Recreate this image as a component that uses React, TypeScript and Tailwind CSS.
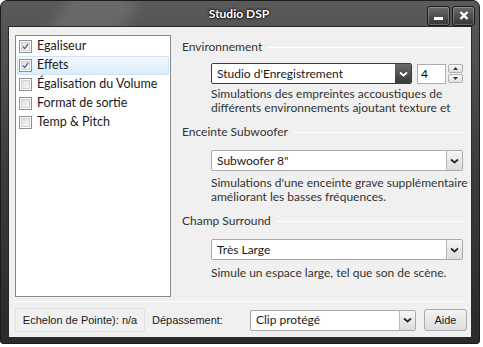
import React from "react";

const ui = { fontFamily: 'Lato, "Noto Sans", sans-serif' };
const classic = { fontFamily: '"Liberation Sans", Arial, sans-serif' };

function Chevron({ light = false }: { light?: boolean }) {
  return (
    <svg width="9" height="6" viewBox="0 0 9 6">
      <path d="M1 1.5 L4.5 4.5 L8 1.5" fill="none" stroke={light ? "#ffffff" : "#2a2a2a"} strokeWidth="1.8" />
    </svg>
  );
}

function Check({ checked }: { checked: boolean }) {
  return (
    <div className="w-[13px] h-[13px] border border-[#8f8f8f] bg-white p-[1px] shrink-0">
      <div className="w-full h-full bg-gradient-to-br from-[#e0e0e0] to-[#f8f8f8] border border-[#d0d0d0] flex items-center justify-center">
        {checked && (
          <svg width="9" height="9" viewBox="0 0 9 9">
            <path d="M1 4.5 L3.5 7 L8 1" fill="none" stroke="#4a5fa0" strokeWidth="1.6" />
          </svg>
        )}
      </div>
    </div>
  );
}

function Combo({ value, dark = false, className = "" }: { value: string; dark?: boolean; className?: string }) {
  return (
    <div className={`flex h-[21px] border ${dark ? "border-[#3c3c3c]" : "border-[#a9a9a9]"} bg-white rounded-[2px] ${className}`}>
      <div className="flex-1 flex items-center pl-[5px] text-[12px] text-[#1a1a1a] whitespace-nowrap" style={ui}>{value}</div>
      {dark ? (
        <div className="w-[16px] flex items-center justify-center rounded-r-[1px] bg-gradient-to-b from-[#6a6a6a] to-[#3a3a3a]">
          <Chevron light />
        </div>
      ) : (
        <div className="w-[16px] flex items-center justify-center border-l border-[#b8b8b8] bg-gradient-to-b from-[#f6f6f6] to-[#dcdcdc]">
          <Chevron />
        </div>
      )}
    </div>
  );
}

function Section({ title, children }: { title: string; children: React.ReactNode }) {
  return (
    <div className="flex flex-col">
      <div className="flex items-center gap-[6px] h-[16px]">
        <span className="text-[12px] text-[#333] whitespace-nowrap" style={ui}>{title}</span>
        <div className="flex-1 h-px bg-[#dcdcdc] border-b border-white" />
      </div>
      <div className="pl-[29px]">{children}</div>
    </div>
  );
}

const items = [
  { label: "Egaliseur", checked: true },
  { label: "Effets", checked: true, selected: true },
  { label: "Égalisation du Volume", checked: false },
  { label: "Format de sortie", checked: false },
  { label: "Temp & Pitch", checked: false },
];

export default function App() {
  return (
    <div className="w-[483px] h-[347px] bg-white overflow-hidden">
      <div className="w-[480px] h-[344px] rounded-t-[7px] rounded-b-[3px] border border-[#1c1c1c] bg-gradient-to-b from-[#5a5a5a] via-[#3c3c3c] to-[#2a2a2a] flex flex-col relative overflow-hidden">
        <div className="absolute left-[60px] top-[-20px] w-[60px] h-[80px] bg-white/10 rotate-[35deg] blur-[6px]" />
        <div className="h-[25px] flex items-center relative">
          <div className="flex-1 text-center text-[12px] font-bold text-white pl-[50px] [text-shadow:0_0_3px_#000,0_0_2px_#000]" style={ui}>
            Studio DSP
          </div>
          <div className="flex gap-[2px] mr-[4px] mt-[4px]">
            <div className="w-[23px] h-[20px] rounded-[3px] border border-[#1a1a1a] bg-gradient-to-b from-[#6c6c6c] to-[#353535] shadow-[inset_0_0_0_1px_rgba(255,255,255,0.25)] flex items-end justify-center pb-[5px]">
              <div className="w-[9px] h-[3px] bg-white" />
            </div>
            <div className="w-[23px] h-[20px] rounded-[3px] border border-[#1a1a1a] bg-gradient-to-b from-[#6c6c6c] to-[#353535] shadow-[inset_0_0_0_1px_rgba(255,255,255,0.25)] flex items-center justify-center">
              <svg width="10" height="9" viewBox="0 0 10 9">
                <path d="M1.5 1 L8.5 8 M8.5 1 L1.5 8" stroke="#fff" strokeWidth="2.4" />
              </svg>
            </div>
          </div>
        </div>
        <div className="mx-[7px] h-[312px] border border-[#2a2a2a] bg-[#f0f0f0] flex flex-col relative">
          <div className="flex pt-[8px] h-[274px]">
            <div className="ml-[6px] w-[156px] h-[262px] border border-[#828790] bg-white pt-[1px] px-[1px] shrink-0">
              {items.map((it) => (
                <div
                  key={it.label}
                  className={`h-[19px] flex items-center gap-[5px] pl-[1px] rounded-[2px] border ${it.selected ? "border-[#cde4f8] bg-gradient-to-b from-[#f4f9fe] to-[#dcecfb]" : "border-transparent"}`}
                >
                  <Check checked={it.checked} />
                  <span className="text-[12.5px] text-[#1a1a1a] whitespace-nowrap" style={ui}>{it.label}</span>
                </div>
              ))}
            </div>
            <div className="flex-1 min-w-0 ml-[11px] mr-[8px] pt-[4px] flex flex-col">
              <Section title="Environnement">
                <div className="flex items-center mt-[8px]">
                  <Combo value="Studio d'Enregistrement" dark className="w-[201px]" />
                  <div className="ml-[5px] w-[29px] h-[20px] border border-[#abadb3] bg-white flex items-center pl-[3px] text-[12px]" style={ui}>4</div>
                  <div className="ml-[2px] flex flex-col gap-[1px]">
                    <div className="w-[15px] h-[9px] rounded-[2px] border border-[#b0b0b0] bg-gradient-to-b from-[#f8f8f8] to-[#dedede] flex items-center justify-center">
                      <svg width="5" height="3" viewBox="0 0 5 3"><path d="M0 3 L2.5 0 L5 3Z" fill="#333" /></svg>
                    </div>
                    <div className="w-[15px] h-[9px] rounded-[2px] border border-[#b0b0b0] bg-gradient-to-b from-[#f8f8f8] to-[#dedede] flex items-center justify-center">
                      <svg width="5" height="3" viewBox="0 0 5 3"><path d="M0 0 L2.5 3 L5 0Z" fill="#333" /></svg>
                    </div>
                  </div>
                </div>
                <p className="mt-[3px] text-[12px] leading-[14px] text-[#333] whitespace-nowrap" style={ui}>
                  Simulations des empreintes accoustiques de<br />différents environnements ajoutant texture et
                </p>
              </Section>
              <div className="mt-[9px]">
                <Section title="Enceinte Subwoofer">
                  <Combo value='Subwoofer 8"' className="mt-[10px]" />
                  <p className="mt-[5px] text-[12px] leading-[14px] text-[#333] whitespace-nowrap" style={ui}>
                    Simulations d'une enceinte grave supplémentaire<br />améliorant les basses fréquences.
                  </p>
                </Section>
              </div>
              <div className="mt-[9px]">
                <Section title="Champ Surround">
                  <Combo value="Très Large" className="mt-[10px]" />
                  <p className="mt-[6px] text-[12px] leading-[14px] text-[#333] whitespace-nowrap" style={ui}>
                    Simule un espace large, tel que son de scène.
                  </p>
                </Section>
              </div>
            </div>
          </div>
          <div className="mx-[6px] h-px bg-[#dcdcdc] border-b border-white" />
          <div className="flex items-center mt-[6px] ml-[6px]">
            <div className="w-[130px] h-[24px] border border-[#e3e3e3] flex items-center justify-center text-[11px] text-[#1a1a1a] whitespace-nowrap" style={classic}>
              Echelon de Pointe): n/a
            </div>
            <span className="ml-[7px] text-[11px] text-[#1a1a1a] whitespace-nowrap" style={classic}>Dépassement:</span>
            <Combo value="Clip protégé" className="ml-[27px] w-[166px]" />
            <div className="ml-[8px] w-[43px] h-[22px] rounded-[3px] border border-[#acacac] bg-gradient-to-b from-[#f4f4f4] to-[#dddddd] flex items-center justify-center text-[11px] text-[#1a1a1a]" style={classic}>
              Aide
            </div>
          </div>
        </div>
      </div>
    </div>
  );
}
